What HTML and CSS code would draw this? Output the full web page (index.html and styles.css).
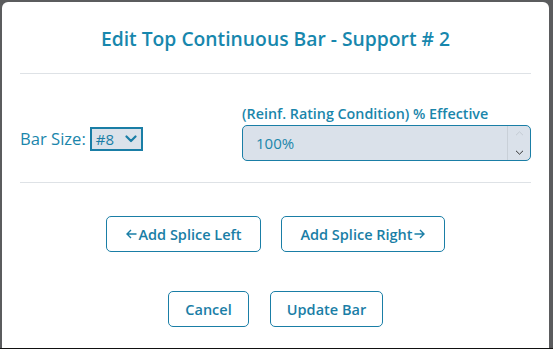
FILE: index.html
```html
<!DOCTYPE html>
<html>
<head>
<meta charset="utf-8">
<link rel="stylesheet" href="styles.css">
</head>
<body>
<div class="modal">
  <div class="header">
    <h1 class="title">Edit Top Continuous Bar - Support # 2</h1>
  </div>
  <div class="body">
    <div class="left">
      <span class="lbl">Bar Size:</span>
      <div class="select">
        <span>#8</span>
        <svg width="12" height="8" viewBox="0 0 12 8"><path d="M1.5 1.5 L6 6 L10.5 1.5" fill="none" stroke="#1a7ea6" stroke-width="2.2" stroke-linecap="round" stroke-linejoin="round"/></svg>
      </div>
    </div>
    <div class="right">
      <div class="flabel">(Reinf. Rating Condition) % Effective</div>
      <div class="input">
        <span class="val">100%</span>
        <div class="spin">
          <svg width="9" height="5" viewBox="0 0 9 5"><path d="M1 4.2 L4.5 0.8 L8 4.2" fill="none" stroke="#c4cbd3" stroke-width="1"/></svg>
          <svg width="9" height="5" viewBox="0 0 9 5"><path d="M1 0.8 L4.5 4.2 L8 0.8" fill="none" stroke="#333" stroke-width="1"/></svg>
        </div>
      </div>
    </div>
  </div>
  <div class="actions row1">
    <button class="btn w1"><svg class="arr" width="11" height="10" viewBox="0 0 11 10"><path d="M10.5 5 H1.2 M5 1 L1 5 L5 9" fill="none" stroke="#1a7ea6" stroke-width="1.4"/></svg>Add Splice Left</button>
    <button class="btn w2">Add Splice Right<svg class="arr" width="11" height="10" viewBox="0 0 11 10"><path d="M0.5 5 H9.8 M6 1 L10 5 L6 9" fill="none" stroke="#1a7ea6" stroke-width="1.4"/></svg></button>
  </div>
  <div class="actions row2">
    <button class="btn w3">Cancel</button>
    <button class="btn w4">Update Bar</button>
  </div>
</div>
<div class="strip"></div>
</body>
</html>
```
FILE: styles.css
```css
html, body {
  margin: 0;
  padding: 0;
}
body {
  background: #5b5c5e;
  width: 553px;
  height: 349px;
  overflow: hidden;
  font-family: "Open Sans", "Noto Sans", sans-serif;
  color: #1a7ea6;
  display: flex;
  flex-direction: column;
}
.modal {
  margin: 2px 4px 0 2px;
  height: 346px;
  background: #fff;
  border-radius: 6px 6px 0 0;
  padding: 0 18px;
  box-sizing: border-box;
}
.strip {
  height: 1px;
  background: #111;
}
.header {
  padding: 23px 0 20px;
  border-bottom: 1px solid #dee2e6;
  text-align: center;
}
.title {
  margin: 0;
  font-size: 19.3px;
  line-height: 28px;
  font-weight: 600;
  color: #1787ad;
}
.body {
  display: grid;
  grid-template-columns: 222px 1fr;
  align-items: end;
  padding: 30px 0 21px;
  border-bottom: 1px solid #dee2e6;
}
.left {
  display: flex;
  align-items: center;
  gap: 4px;
  margin-bottom: 10px;
}
.lbl {
  font-size: 16.6px;
  line-height: 24px;
  color: #1a86ab;
}
.select {
  display: flex;
  align-items: center;
  justify-content: space-between;
  box-sizing: border-box;
  width: 53px;
  height: 24px;
  border: 2px solid #1a7ea6;
  background: #dbe2ea;
  padding: 0 4px 0 4px;
  font-size: 15px;
  color: #1a7ea6;
}
.flabel {
  font-size: 14.3px;
  line-height: 20px;
  font-weight: 600;
  color: #1a86ab;
  margin-bottom: 1px;
}
.input {
  display: flex;
  box-sizing: border-box;
  height: 36px;
  border: 1px solid #1a7ea6;
  border-radius: 5px;
  background: #dae1ea;
}
.val {
  flex: 1;
  padding-left: 13px;
  font-size: 15px;
  line-height: 34px;
  color: #1a86ab;
}
.spin {
  width: 22px;
  border-left: 1px solid #c9d0d8;
  display: flex;
  flex-direction: column;
  justify-content: space-between;
  align-items: center;
  padding: 5px 0 5px;
}
.actions {
  display: flex;
  justify-content: center;
}
.row1 {
  margin-top: 33px;
  gap: 20px;
}
.row2 {
  margin-top: 39px;
  gap: 21px;
}
.btn {
  height: 36px;
  box-sizing: border-box;
  background: #fff;
  border: 1px solid #1a7ea6;
  border-radius: 5px;
  color: #1a7ea6;
  font-family: "Open Sans", "Noto Sans", sans-serif;
  font-size: 14.5px;
  font-weight: 600;
  padding: 0;
  display: inline-flex;
  align-items: center;
  justify-content: center;
}
.arr {
  margin: 0 1px;
}
.w1 { width: 155px; }
.w2 { width: 164px; }
.w3 { width: 81px; }
.w4 { width: 113px; }
```
